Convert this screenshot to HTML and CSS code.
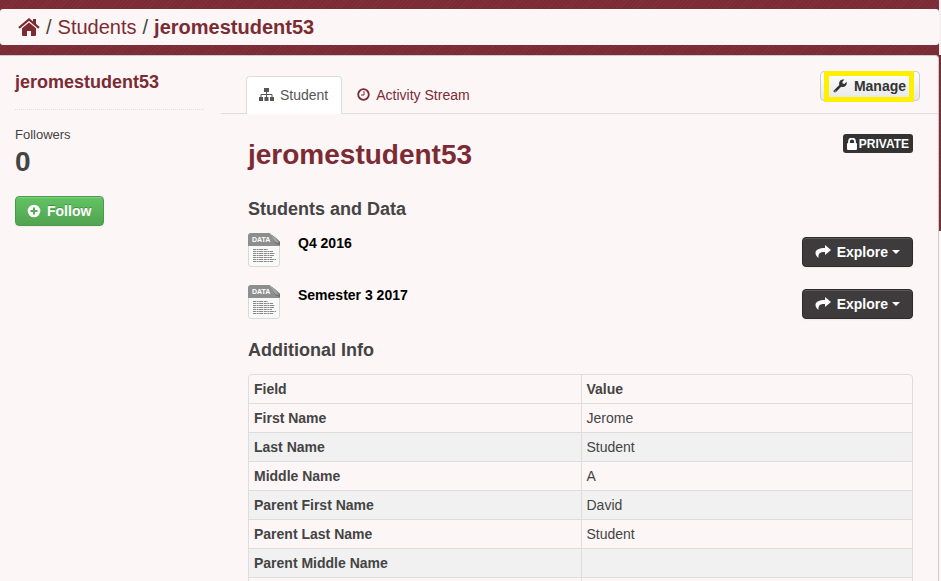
FILE: index.html
```html
<!DOCTYPE html>
<html lang="en">
<head>
<meta charset="utf-8">
<title>jeromestudent53</title>
<link rel="stylesheet" href="styles.css">
</head>
<body>
<div class="page">
  <nav class="toolbar" aria-label="Breadcrumb">
    <a href="#" aria-label="Home"><svg class="home" viewBox="0 0 22 18"><path d="M11 4.500l7 5.800V17q0 1-1 1h-4v-5H9v5H5q-1 0-1-1v-6.700z" fill="currentColor"/><path d="M1 9.800L11 1.500l10 8.300" fill="none" stroke="currentColor" stroke-width="2.200"/><path d="M15 1h3v6l-3-2.500z" fill="currentColor"/></svg></a>
    <span>/</span><a href="#">Students</a><span>/</span><a class="current" href="#">jeromestudent53</a>
  </nav>
  <div class="wrapper">
    <aside class="sidebar">
      <h2 class="side-title">jeromestudent53</h2>
      <dl class="stats"><dt>Followers</dt><dd>0</dd></dl>
      <button class="btn follow" type="button"><svg class="icon-follow" viewBox="0 0 14 14"><circle cx="7" cy="7" r="6.300" fill="currentColor"/><path d="M7 3.500v7M3.500 7h7" stroke="#56ac56" stroke-width="2"/></svg>Follow</button>
    </aside>
    <main class="primary">
      <header class="page-header">
        <nav class="tabs">
          <a class="tab active" href="#"><svg class="icon-tree" viewBox="0 0 15 13"><path d="M5 0h5v4H5zM0 9h4v4H0zM5.500 9h4v4h-4zM11 9h4v4h-4z" fill="currentColor"/><path d="M7.500 4v5M2 9V6.500h11V9" fill="none" stroke="currentColor"/></svg>Student</a>
          <a class="tab" href="#"><svg class="icon-clock" viewBox="0 0 13 13"><circle cx="6.500" cy="6.500" r="5.300" fill="none" stroke="currentColor" stroke-width="1.800"/><path d="M7 3v4H4" fill="none" stroke="currentColor"/></svg>Activity Stream</a>
        </nav>
        <div class="manage-frame"><button class="btn manage" type="button"><svg class="icon-wrench" viewBox="0 0 14 14"><path d="M1 11.200L6.300 6Q5.500 3 7.500 1.300 9.300 0 11.500.600L9.300 2.800l.4 1.800 1.700.4L13.600 2.800q.6 2.200-.9 4Q11 8.500 8.200 7.800L3 13q-1 .8-2 0t0-1.800z" fill="currentColor"/><circle cx="2.200" cy="12" r=".6" fill="#fff"/></svg>Manage</button></div>
      </header>
      <div class="content">
        <div class="title-row">
          <h1>jeromestudent53</h1>
          <span class="private"><svg class="icon-lock" viewBox="0 0 10 12"><path d="M2 6V3.500a3 3 0 0 1 6 0V6" fill="none" stroke="currentColor" stroke-width="1.800"/><rect y="5" width="10" height="7" rx="1" fill="currentColor"/></svg>PRIVATE</span>
        </div>
        <h2>Students and Data</h2>
        <ul class="resources">
          <li>
            <svg class="file" viewBox="0 0 32 34"><path d="M3 .5h19l9.500 9V31q0 2.500-2.500 2.500H3Q.5 33.500.5 31V3Q.5.500 3 .500z" fill="#f9f9f9" stroke="#d8dada"/><path d="M0 13V3q0-3 3-3h18l11 9v4z" fill="#8d8f8f"/><path d="M20 0q4 0 5 6 1 5 7 6V9Q27 3 20 0z" fill="#6d6f6f"/><path d="M22 1q2 2 3 5 2 4 6 4-3-6-9-9z" fill="#a3a5a5"/><path d="M5 16.500h15M5 18.500h20M5 20.500h22M5 22.500h21M5 24.500h19M5 26.500h23M5 28.500h20" stroke="#888" stroke-dasharray="3 .6 2 .5 4 .7"/><text x="4" y="9" class="file-label">DATA</text></svg>
            <a href="#">Q4 2016</a>
            <button class="btn explore" type="button"><svg class="icon-share" viewBox="0 0 16 14"><path d="M10 0l6 5-6 5V7C5 6.500 3 8.500 3.500 13 1.500 11.500.5 9.500.5 8 .5 4.500 4.500 3 10 3z" fill="currentColor"/></svg>Explore<span class="caret"></span></button>
          </li>
          <li>
            <svg class="file" viewBox="0 0 32 34"><path d="M3 .5h19l9.500 9V31q0 2.500-2.500 2.500H3Q.5 33.500.5 31V3Q.5.500 3 .500z" fill="#f9f9f9" stroke="#d8dada"/><path d="M0 13V3q0-3 3-3h18l11 9v4z" fill="#8d8f8f"/><path d="M20 0q4 0 5 6 1 5 7 6V9Q27 3 20 0z" fill="#6d6f6f"/><path d="M22 1q2 2 3 5 2 4 6 4-3-6-9-9z" fill="#a3a5a5"/><path d="M5 16.500h15M5 18.500h20M5 20.500h22M5 22.500h21M5 24.500h19M5 26.500h23M5 28.500h20" stroke="#888" stroke-dasharray="3 .6 2 .5 4 .7"/><text x="4" y="9" class="file-label">DATA</text></svg>
            <a href="#">Semester 3 2017</a>
            <button class="btn explore" type="button"><svg class="icon-share" viewBox="0 0 16 14"><path d="M10 0l6 5-6 5V7C5 6.500 3 8.500 3.500 13 1.500 11.500.5 9.500.5 8 .5 4.500 4.500 3 10 3z" fill="currentColor"/></svg>Explore<span class="caret"></span></button>
          </li>
        </ul>
        <h2>Additional Info</h2>
        <table>
          <thead><tr><th scope="col">Field</th><th scope="col">Value</th></tr></thead>
          <tbody>
            <tr><th scope="row">First Name</th><td>Jerome</td></tr>
            <tr><th scope="row">Last Name</th><td>Student</td></tr>
            <tr><th scope="row">Middle Name</th><td>A</td></tr>
            <tr><th scope="row">Parent First Name</th><td>David</td></tr>
            <tr><th scope="row">Parent Last Name</th><td>Student</td></tr>
            <tr><th scope="row">Parent Middle Name</th><td></td></tr>
            <tr><th scope="row"></th><td></td></tr>
          </tbody>
        </table>
      </div>
    </main>
  </div>
</div>
</body>
</html>
```
FILE: styles.css
```css
* { box-sizing: border-box; }
html { height: 100%; overflow: hidden; background: #fdf6f6; }
body {
  margin: 0;
  height: 100%;
  overflow: hidden;
  font: 14px/20px "Liberation Sans", Arial, sans-serif;
  color: #444;
  background:
    linear-gradient(#f6f0f0, #f6f0f0) 100% 0 / 2px 55px no-repeat,
    repeating-linear-gradient(135deg, #ffffff08 0 1px, #0000 1px 3px) 0 0 / 100% 231px no-repeat,
    linear-gradient(#7b2b33, #7b2b33) 0 0 / 100% 231px no-repeat;
}
a { color: #7b2b33; text-decoration: none; }
h1, h2, ul, dl, dd { margin: 0; padding: 0; }
h2 { font-size: 18px; line-height: 24px; }
.file-label { font: bold 7px "Liberation Sans", Arial, sans-serif; fill: #fff; }
.page { padding: 9px 2px 0 0; }
.toolbar {
  display: flex;
  align-items: center;
  gap: 6px;
  height: 36px;
  padding-left: 18px;
  margin-bottom: 10px;
  border-radius: 3px;
  background: #fdf6f6;
  font-size: 20px;
}
.home { display: block; width: 22px; height: 18px; }
.current { font-weight: bold; }
.wrapper {
  display: grid;
  grid-template-columns: 221px 1fr;
  min-height: calc(100vh - 55px);
  border: solid #ccc;
  border-width: 1px 1px 0 0;
  border-radius: 0 4px 0 0;
  background: #fdf6f6;
}
.sidebar { padding: 14px 17px 0 15px; }
.side-title { padding-bottom: 15px; border-bottom: 1px dotted #ddd; color: #7b2b33; }
.stats { padding: 15px 0 17px; }
.stats dt { font-size: 13px; }
.stats dd { font-size: 28px; line-height: 34px; font-weight: bold; }
.btn {
  display: inline-flex;
  align-items: center;
  height: 30px;
  padding: 0 12px;
  border: 1px solid;
  border-radius: 4px;
  font: bold 14px/20px "Liberation Sans", Arial, sans-serif;
}
.follow {
  gap: 6px;
  padding-left: 11px;
  border-color: #4a9a4a;
  background: linear-gradient(#62c462, #51a351);
  box-shadow: inset 0 1px 0 #81cf81, 0 1px 2px #0000000d;
  color: #fff;
  text-shadow: 0 -1px 0 #00000040;
}
.icon-follow { width: 14px; height: 14px; }
.page-header {
  display: flex;
  justify-content: space-between;
  align-items: flex-end;
  padding: 0 18px 0 25px;
  height: 58px;
  border-bottom: 1px solid #ddd;
}
.tabs { display: flex; gap: 2px; margin-bottom: -1px; }
.tab {
  display: flex;
  align-items: center;
  gap: 6px;
  height: 38px;
  padding: 0 13px 2px 12px;
  border: 1px solid transparent;
  border-bottom: 0;
  border-radius: 4px 4px 0 0;
}
.active { border-color: #ddd; background: #fff; color: #555; }
.icon-tree { width: 15px; height: 13px; }
.icon-clock { width: 13px; height: 13px; }
.manage-frame { display: flex; position: relative; margin-bottom: 12px; }
.manage-frame::after {
  content: "";
  position: absolute;
  inset: 0 6px -1px 4px;
  border: 5px solid #fff000;
}
.manage {
  gap: 7px;
  padding-right: 13px;
  border-color: #ccc;
  background: linear-gradient(#fff, #e6e6e6);
  color: #333;
}
.icon-wrench { width: 14px; height: 14px; }
.content { padding: 20px 25px 0 27px; }
.title-row { display: flex; justify-content: space-between; align-items: flex-start; margin-bottom: 21px; }
h1 { font-size: 28px; line-height: 42px; color: #7b2b33; }
.private {
  display: flex;
  align-items: center;
  gap: 2px;
  height: 19px;
  padding: 0 4px;
  border-radius: 3px;
  background: #333;
  color: #fff;
  font-size: 12px;
  font-weight: bold;
}
.icon-lock { width: 10px; height: 12px; }
.resources { list-style: none; padding: 12px 0 1px; }
.resources li { display: flex; align-items: flex-start; height: 52px; }
.resources a { flex: 1; padding-left: 18px; color: #000; font-weight: bold; }
.file { width: 32px; height: 34px; }
.explore {
  gap: 6px;
  margin-top: 4px;
  border-color: #2c2b2b;
  background: #3d3b3b;
  box-shadow: inset 0 1px 0 #5c5a5a, 0 1px 2px #0000000d;
  color: #fff;
}
.icon-share { width: 16px; height: 14px; }
.caret { border: 4px solid transparent; border-top-color: #fff; border-bottom: 0; margin-left: -2px; }
table {
  width: 100%;
  margin-top: 12px;
  table-layout: fixed;
  border: 1px solid #ddd;
  border-radius: 4px;
  border-spacing: 0;
}
th, td { height: 29px; padding: 4px 5px; text-align: left; border-bottom: 1px solid #ddd; }
th + th, td { border-left: 1px solid #ddd; }
tbody tr:nth-child(even) { background: #f1f1f1; }
```
